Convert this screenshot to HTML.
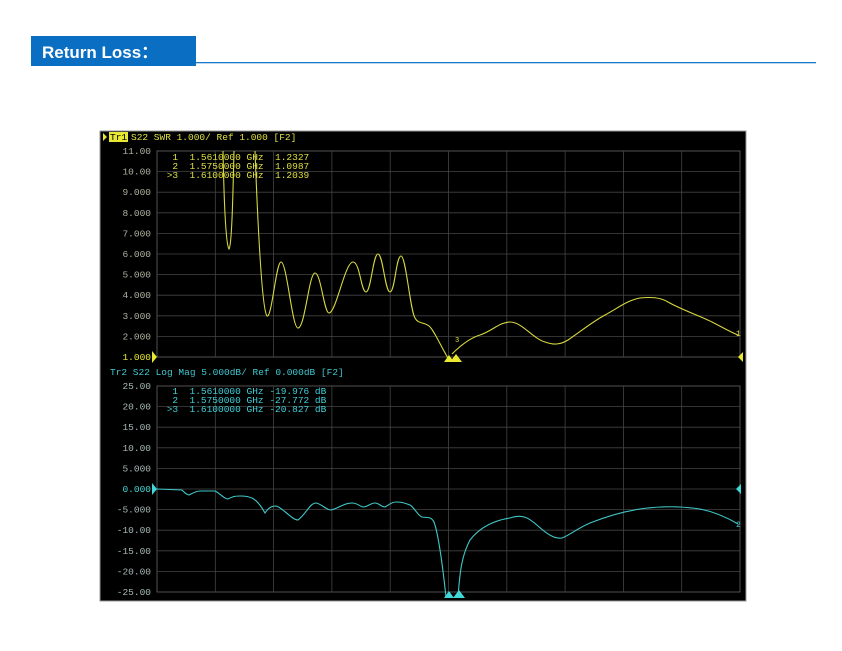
<!DOCTYPE html>
<html><head><meta charset="utf-8"><style>
html,body{margin:0;padding:0;background:#fff;width:842px;height:651px;overflow:hidden}
svg{display:block}
.pre{white-space:pre}
</style></head><body>
<svg width="842" height="651" viewBox="0 0 842 651" xmlns="http://www.w3.org/2000/svg">
<rect x="31" y="36" width="165" height="30" fill="#0a6fc2"/>
<text x="42" y="58" font-family="Liberation Sans, Noto Sans CJK SC, sans-serif" font-weight="bold" font-size="17" fill="#fff">Return Loss：</text>
<rect x="196" y="62" width="620" height="1.3" fill="#1a78c8"/>
<rect x="100" y="131" width="646" height="470" fill="#000" stroke="#999" stroke-width="1"/>
<g font-family="Liberation Mono, DejaVu Sans Mono, monospace" font-size="9.5">
<g stroke="#444" stroke-width="0.8" fill="none">
<rect x="157" y="151" width="583" height="206" stroke="#666"/>
<path d="M215.3 151V357M273.6 151V357M331.9 151V357M390.2 151V357M448.5 151V357M506.8 151V357M565.1 151V357M623.4 151V357M681.7 151V357M157 171.6H740M157 192.2H740M157 212.8H740M157 233.4H740M157 254H740M157 274.6H740M157 295.2H740M157 315.8H740M157 336.4H740"/>
</g>
<g stroke="#444" stroke-width="0.8" fill="none">
<rect x="157" y="386" width="583" height="206" stroke="#666"/>
<path d="M215.3 386V592M273.6 386V592M331.9 386V592M390.2 386V592M448.5 386V592M506.8 386V592M565.1 386V592M623.4 386V592M681.7 386V592M157 406.6H740M157 427.2H740M157 447.8H740M157 468.4H740M157 489H740M157 509.6H740M157 530.2H740M157 550.8H740M157 571.4H740"/>
</g>
<g fill="#b0b0a0" text-anchor="end">
<text x="151" y="154">11.00</text><text x="151" y="174.6">10.00</text><text x="151" y="195.2">9.000</text><text x="151" y="215.8">8.000</text><text x="151" y="236.4">7.000</text><text x="151" y="257">6.000</text><text x="151" y="277.6">5.000</text><text x="151" y="298.2">4.000</text><text x="151" y="318.8">3.000</text><text x="151" y="339.4">2.000</text><text x="151" y="360" fill="#e8e830">1.000</text>
</g>
<g fill="#a8b8b8" text-anchor="end">
<text x="151" y="389">25.00</text><text x="151" y="409.6">20.00</text><text x="151" y="430.2">15.00</text><text x="151" y="450.8">10.00</text><text x="151" y="471.4">5.000</text><text x="151" y="492" fill="#40d8d8">0.000</text><text x="151" y="512.6">-5.000</text><text x="151" y="533.2">-10.00</text><text x="151" y="553.8">-15.00</text><text x="151" y="574.4">-20.00</text><text x="151" y="595">-25.00</text>
</g>
<rect x="109" y="132" width="19" height="10" fill="#e8e830"/>
<path d="M103 133l4 4-4 4z" fill="#e8e830"/>
<text x="110" y="140" fill="#000">Tr1</text>
<text x="131" y="140" fill="#e0e040">S22 SWR 1.000/ Ref 1.000 [F2]</text>
<g fill="#e0e040">
<text class="pre" x="161" y="160">  1  1.5610000 GHz  1.2327</text>
<text class="pre" x="161" y="169">  2  1.5750000 GHz  1.0987</text>
<text class="pre" x="161" y="178"> &gt;3  1.6100000 GHz  1.2039</text>
</g>
<text x="110" y="375" fill="#40c8d0">Tr2 S22 Log Mag 5.000dB/ Ref 0.000dB [F2]</text>
<g fill="#40d0d8">
<text class="pre" x="161" y="394">  1  1.5610000 GHz -19.976 dB</text>
<text class="pre" x="161" y="403">  2  1.5750000 GHz -27.772 dB</text>
<text class="pre" x="161" y="412"> &gt;3  1.6100000 GHz -20.827 dB</text>
</g>
</g>
<path fill="none" stroke="#d8d840" stroke-width="1.1" d="M223 151 C224 200 226 245 229 249 C232 245 233 190 234 151 M255 151 C258 230 262 310 267 316 C272 318 276 262 281 262 C287 262 292 328 298 328 C305 328 309 273 315 273 C321 273 324 313 329 313 C336 313 345 262 353 262 C360 262 361 292 366 292 C371 292 373 254 378 254 C383 254 385 292 390 292 C395 292 396 256 401 256 C406 256 410 310 415 318 C418 324 424 322 429 326 C434 330 440 345 448 358 M452 354 C460 346 470 338 480 335 C492 331 500 322 510 322 C522 322 532 338 545 342 C553 345 560 345 568 340 C580 332 592 322 605 315 C618 308 628 300 640 298 C650 297 660 297 668 302 C680 309 700 316 712 322 C722 327 730 332 738 335"/>
<path d="M738 357l5-5v10z" fill="#e8e830"/>
<path d="M152 351l5 6-5 6z" fill="#e8e830"/>
<path d="M450 362l6-8 6 8z M444 362l5-7 5 7z" fill="#e8e830"/>
<text x="455" y="342" font-family="Liberation Mono, monospace" font-size="7" fill="#e0e040">3</text>
<text x="736" y="336" font-family="Liberation Mono, monospace" font-size="8" fill="#e0e040">1</text>
<path fill="none" stroke="#40c8c8" stroke-width="1.1" d="M157 489 L182 490 C185 493 187 495 189 495 C193 493 196 491 200 491 L215 491 C221 494 224 499 228 499 C232 497 234 496 240 496 C250 496 256 497 265 513 C269 507 272 506 276 506 C282 507 292 520 298 520 C306 514 310 503 316 503 C322 504 326 510 331 510 C339 508 344 503 352 503 C358 503 360 507 364 507 C369 506 371 503 375 503 C379 503 381 507 385 507 C389 505 391 502 396 502 C403 502 404 503 410 505 C414 507 418 516 422 517 C427 518 431 516 434 522 C438 533 442 560 446 597 M458 597 C460 570 462 555 470 540 C480 527 495 520 510 518 C522 514 528 517 538 526 C548 535 555 539 562 538 C570 535 578 528 590 523 C605 517 620 512 640 509 C660 506 680 506 700 509 C715 512 728 518 738 524"/>
<path d="M736 489l5-5v10z" fill="#40d8d8"/>
<path d="M152 483l5 6-5 6z" fill="#40d8d8"/>
<path d="M453 598l6-8 6 8z M444 598l5-7 5 7z" fill="#40d8d8"/>
<text x="736" y="527" font-family="Liberation Mono, monospace" font-size="8" fill="#40d0d8">2</text>
</svg>
</body></html>
